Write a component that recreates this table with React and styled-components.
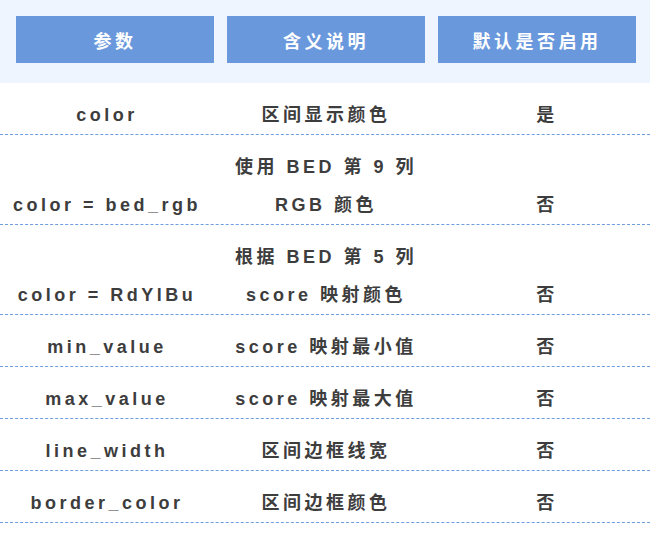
import React from 'react';
import styled, { createGlobalStyle } from 'styled-components';

const GlobalStyle = createGlobalStyle`
  html, body {
    margin: 0;
    padding: 0;
    background: #ffffff;
  }
  body {
    width: 650px;
    overflow: hidden;
    font-family: 'Liberation Sans', 'Noto Sans CJK SC', sans-serif;
  }
`;

const Table = styled.section`
  width: 650px;
  display: flex;
  flex-direction: column;
  color: #3d3d3d;
  font-size: 18px;
  font-weight: 700;
  letter-spacing: 3.5px;
`;

const HeaderBand = styled.div`
  display: grid;
  grid-template-columns: repeat(3, 198px);
  column-gap: 13px;
  padding: 16px 14px 20px 16px;
  background-color: #eef5fe;
`;

const HeaderCell = styled.div`
  height: 47px;
  display: flex;
  align-items: center;
  justify-content: center;
  background-color: #6a98dc;
  color: #ffffff;
`;

const Row = styled.div`
  display: grid;
  grid-template-columns: 214px 224px 1fr;
  padding-top: 13px;
  border-bottom: 1px dashed #6f9ee0;
`;

const Cell = styled.div`
  display: flex;
  flex-direction: column;
  align-items: center;
  justify-content: flex-end;
  line-height: 38px;
  padding-left: ${(p) => (p.$last ? '6px' : '0')};
  white-space: nowrap;
`;

const rows = [
  { name: 'color', desc: ['区间显示颜色'], on: '是' },
  { name: 'color = bed_rgb', desc: ['使用 BED 第 9 列', 'RGB 颜色'], on: '否' },
  { name: 'color = RdYlBu', desc: ['根据 BED 第 5 列', 'score 映射颜色'], on: '否' },
  { name: 'min_value', desc: ['score 映射最小值'], on: '否' },
  { name: 'max_value', desc: ['score 映射最大值'], on: '否' },
  { name: 'line_width', desc: ['区间边框线宽'], on: '否' },
  { name: 'border_color', desc: ['区间边框颜色'], on: '否' },
];

export default function App() {
  return (
    <>
      <GlobalStyle />
      <Table>
        <HeaderBand>
          <HeaderCell>参数</HeaderCell>
          <HeaderCell>含义说明</HeaderCell>
          <HeaderCell>默认是否启用</HeaderCell>
        </HeaderBand>

        {rows.map((r) => (
          <Row key={r.name}>
            <Cell>{r.name}</Cell>
            <Cell>
              {r.desc.map((line) => (
                <span key={line}>{line}</span>
              ))}
            </Cell>
            <Cell $last>{r.on}</Cell>
          </Row>
        ))}
      </Table>
    </>
  );
}
